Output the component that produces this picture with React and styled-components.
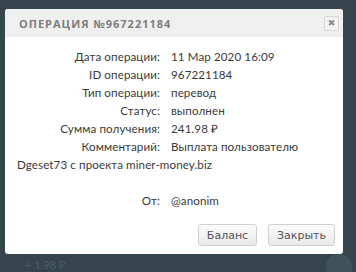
import styled, { createGlobalStyle } from 'styled-components';

const GlobalStyle = createGlobalStyle`
  html, body {
    margin: 0;
    padding: 0;
    background: #36454d;
    height: 272px;
    overflow: hidden;
  }
`;

const Page = styled.div`
  width: 356px;
  height: 272px;
  padding: 9px 0 0 5px;
  box-sizing: border-box;
  font-family: 'Lato', 'Liberation Sans', sans-serif;
`;

const Modal = styled.div`
  width: 338px;
  background: #fff;
  border-radius: 3px;
  overflow: hidden;
`;

const Header = styled.div`
  height: 28px;
  background: #efefef;
  display: flex;
  align-items: center;
  justify-content: space-between;
  padding: 0 4px 0 14px;
`;

const Title = styled.div`
  font-family: 'Open Sans', sans-serif;
  font-size: 11px;
  font-weight: 700;
  letter-spacing: 1px;
  color: #7e7e7e;
`;

const CloseBtn = styled.div`
  width: 13px;
  height: 13px;
  border: 1px solid #d6d6d6;
  border-radius: 2px;
  background: #f3f3f3;
  color: #8a8a8a;
  font-size: 9px;
  line-height: 13px;
  text-align: center;
  font-family: 'DejaVu Sans', sans-serif;
`;

const Body = styled.div`
  padding: 11px 8px 8px 12px;
  font-size: 11.6px;
  line-height: 18px;
  letter-spacing: 0.1px;
  color: #3a3a3a;
`;

const Row = styled.div`
  min-height: 18px;
`;

const Label = styled.span`
  display: inline-block;
  width: 143px;
  text-align: right;
  margin-right: 11px;
`;

const Spacer = styled.div`
  height: 18px;
`;

const Footer = styled.div`
  display: flex;
  justify-content: flex-end;
  gap: 11px;
  margin-top: 14px;
`;

const Button = styled.button`
  width: ${(p) => p.$w}px;
  height: 22px;
  padding: 0;
  border: 1px solid #d0d0d0;
  border-radius: 3px;
  background: linear-gradient(#fbfbfb, #e9e9e9);
  color: #555;
  font-family: 'DejaVu Sans', sans-serif;
  font-size: 11px;
`;

const Under = styled.div`
  display: flex;
  justify-content: space-between;
  align-items: flex-start;
  padding: 5px 4px 0 20px;
  color: #4b5c64;
  font-size: 11px;
  line-height: 12px;
`;

const Avatar = styled.div`
  width: 26px;
  height: 26px;
  border-radius: 50%;
  background: #3f525b;
  margin-top: -5px;
`;

const rows = [
  ['Дата операции:', '11 Мар 2020 16:09'],
  ['ID операции:', '967221184'],
  ['Тип операции:', 'перевод'],
  ['Статус:', 'выполнен'],
  ['Сумма получения:', '241.98 ₽'],
  ['Комментарий:', 'Выплата пользователю Dgeset73 с проекта miner-money.biz'],
];

const App = () => {
  return (
    <Page>
      <GlobalStyle />
      <Modal>
        <Header>
          <Title>ОПЕРАЦИЯ №967221184</Title>
          <CloseBtn>✖</CloseBtn>
        </Header>
        <Body>
          {rows.map(([label, value]) => (
            <Row key={label}>
              <Label>{label}</Label>
              {value}
            </Row>
          ))}
          <Spacer />
          <Row>
            <Label>От:</Label>
            @anonim
          </Row>
          <Footer>
            <Button $w={59}>Баланс</Button>
            <Button $w={67}>Закрыть</Button>
          </Footer>
        </Body>
      </Modal>
      <Under>
        <span>+ 1.98 ₽</span>
        <Avatar />
      </Under>
    </Page>
  );
};

export default App;
